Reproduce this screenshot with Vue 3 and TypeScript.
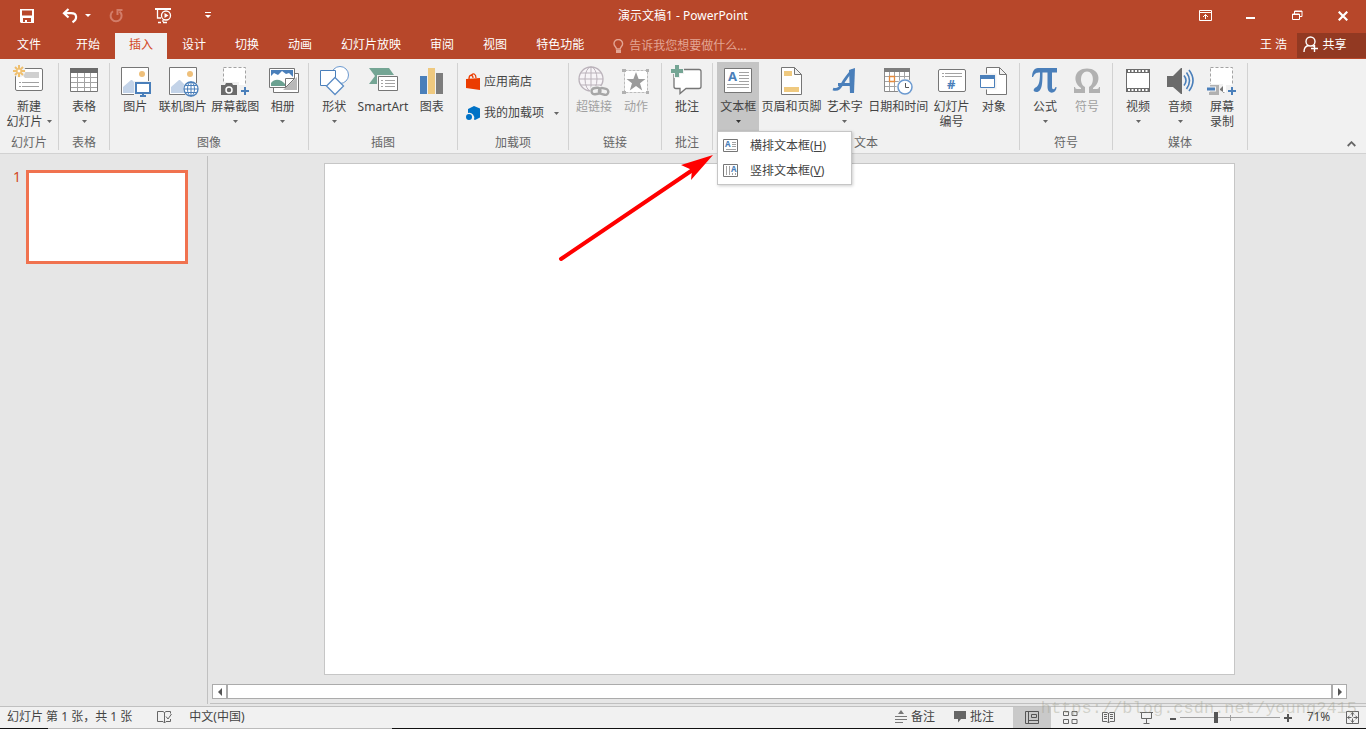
<script setup lang="ts">
import { ref } from 'vue'

interface Tool {
  icon: string
  label: string
  label2?: string
  caret?: boolean
  disabled?: boolean
  menu?: boolean
}
interface Group {
  name: string
  tools: Tool[]
}

const tabs = ['开始', '插入', '设计', '切换', '动画', '幻灯片放映', '审阅', '视图', '特色功能']
const activeTab = ref('插入')
const query = ref('')
const zoom = ref(35)

const groups: Group[] = [
  { name: '幻灯片', tools: [{ icon: 'slide', label: '新建', label2: '幻灯片', caret: true }] },
  { name: '表格', tools: [{ icon: 'table', label: '表格', caret: true }] },
  {
    name: '图像',
    tools: [
      { icon: 'picture', label: '图片' },
      { icon: 'online', label: '联机图片' },
      { icon: 'capture', label: '屏幕截图', caret: true },
      { icon: 'album', label: '相册', caret: true },
    ],
  },
  {
    name: '插图',
    tools: [
      { icon: 'shapes', label: '形状', caret: true },
      { icon: 'smartart', label: 'SmartArt' },
      { icon: 'chart', label: '图表' },
    ],
  },
  { name: '加载项', tools: [] },
  {
    name: '链接',
    tools: [
      { icon: 'link', label: '超链接', disabled: true },
      { icon: 'action', label: '动作', disabled: true },
    ],
  },
  { name: '批注', tools: [{ icon: 'comment', label: '批注' }] },
  {
    name: '文本',
    tools: [
      { icon: 'textbox', label: '文本框', caret: true, menu: true },
      { icon: 'header', label: '页眉和页脚' },
      { icon: 'wordart', label: '艺术字', caret: true },
      { icon: 'date', label: '日期和时间' },
      { icon: 'number', label: '幻灯片', label2: '编号' },
      { icon: 'object', label: '对象' },
    ],
  },
  {
    name: '符号',
    tools: [
      { icon: 'pi', label: '公式', caret: true },
      { icon: 'omega', label: '符号', disabled: true },
    ],
  },
  {
    name: '媒体',
    tools: [
      { icon: 'video', label: '视频', caret: true },
      { icon: 'audio', label: '音频', caret: true },
      { icon: 'record', label: '屏幕', label2: '录制' },
    ],
  },
]
</script>

<template>
  <div class="window">
    <header class="top">
      <div class="titlebar">
        <div class="quick">
          <button class="save" aria-label="保存">
            <svg width="16" height="16" viewBox="0 0 16 16"><path fill="#fff" fill-rule="evenodd" d="M1 1h14v14H2l-1-1zM3 2.500v5h10v-5zM4 10v4h2v-2h2v2h4v-4z" /></svg>
          </button>
          <button class="undo" aria-label="撤消">
            <svg width="16" height="16" viewBox="0 0 16 16"><path fill="none" stroke="#fff" stroke-width="2.200" d="M6.500 1L2 5.200l4.500 4.300M2.500 5.200h6.500c6.500 0 6.500 6 1.500 9" /></svg>
          </button>
          <button class="undo-more" aria-label="更多撤消"><svg width="6" height="4" viewBox="0 0 6 4"><path fill="#fff" d="M0 0h6L3 3z" /></svg></button>
          <button class="redo" aria-label="重复">
            <svg width="16" height="16" viewBox="0 0 16 16"><path fill="none" stroke="#d27d69" stroke-width="2" d="M5 3.300a5.500 5.500 0 1 0 6.500.2M9.500 7V2H14.500" /></svg>
          </button>
          <button class="present" aria-label="从头开始">
            <svg width="18" height="16" viewBox="0 0 18 16"><path fill="#fff" d="M1 0h16v2H1z" /><path fill="none" stroke="#fff" stroke-width="1.300" d="M3.500 2v8H7M9 12v2M4 14.500h3M9 14.500h4" /><circle cx="12" cy="7.500" r="4.500" fill="#b7472a" stroke="#fff" stroke-width="1.300" /><path fill="#fff" d="M10.500 5v5l4-2.500z" /></svg>
          </button>
          <button class="customize" aria-label="自定义快速访问工具栏"><svg width="6" height="7" viewBox="0 0 6 7"><path fill="#fff" d="M0 0h6v1H0zM0 3h6L3 6z" /></svg></button>
        </div>
        <div class="title">演示文稿1 - PowerPoint</div>
        <div class="controls">
          <button aria-label="功能区显示选项"><svg width="13" height="11" viewBox="0 0 13 11"><path fill="none" stroke="#fff" d="M.5.5h12v10H.5zM0 2.500h13M6.500 9V4.500M4 7l2.500-2.500L9 7M5 5.500h3" /></svg></button>
          <button aria-label="最小化"><svg width="10" height="10" viewBox="0 0 10 10"><path fill="#fff" d="M0 6h9v2H0z" /></svg></button>
          <button aria-label="还原"><svg width="11" height="11" viewBox="0 0 11 11"><path fill="none" stroke="#fff" d="M.5 4h7v5.500h-7zM0 4.500h8M2.500 4V1h7.500v5.500H8M2.500 1.500H10" /></svg></button>
          <button aria-label="关闭"><svg width="10" height="10" viewBox="0 0 10 10"><path stroke="#fff" stroke-width="2.200" d="M.7.7l8.600 8.600M9.300.7L.7 9.300" /></svg></button>
        </div>
      </div>

      <div class="tabrow">
        <button class="file">文件</button>
        <nav class="tabs">
          <button v-for="t in tabs" :key="t" :class="{ active: t === activeTab }" @click="activeTab = t">{{ t }}</button>
        </nav>
        <label class="tell">
          <svg width="11" height="15" viewBox="0 0 11 15"><path fill="none" stroke="#e3a594" stroke-width="1.400" d="M3.500 10C3.500 8 1 7.500 1 4.800a4.300 4.300 0 0 1 8.600 0C9.600 7.500 7.200 8 7.200 10z" /><path fill="#e3a594" d="M3 11h5v3H3z" /></svg>
          <input v-model="query" type="text" placeholder="告诉我您想要做什么..." aria-label="告诉我您想要做什么" />
        </label>
        <button class="user">王 浩</button>
        <button class="share">
          <svg width="16" height="17" viewBox="0 0 16 17"><g fill="none" stroke="#fff" stroke-width="1.400"><circle cx="7.500" cy="5.500" r="4.500" /><path d="M1 16c0-4 2-6 4.500-6.500M9.500 9.500l1.500 1M8 12.500h7M11.500 9v7" /></g></svg>
          共享
        </button>
      </div>
    </header>

    <section class="ribbon" aria-label="插入">
      <div v-for="g in groups" :key="g.name" class="group">
        <div v-if="g.tools.length" class="tools">
          <div v-for="t in g.tools" :key="t.icon" class="slot">
            <button class="tool" :class="{ open: t.menu }" :disabled="t.disabled">
              <svg class="icon" width="32" height="32" viewBox="0 0 32 32" fill="none">
                <template v-if="t.icon === 'slide'">
                  <rect x="2.500" y="3.500" width="27" height="22" rx="1.500" fill="#fff" stroke="#767676" />
                  <path fill="#d0d0d0" d="M7 7h19v6H12z" />
                  <path stroke="#a0a0a0" d="M6 17.500h2M9 17.500h17M6 21.500h2M9 21.500h17" />
                  <circle cx="6" cy="6" r="6.500" fill="#f1f1f1" />
                  <path stroke="#efbf6e" stroke-width="2" d="M6 0v12M0 6h12M2 2l8 8M10 2l-8 8" />
                  <circle cx="6" cy="6" r="2" fill="#fff" stroke="#efbf6e" />
                </template>
                <template v-else-if="t.icon === 'table'">
                  <path fill="#fff" stroke="#767676" d="M2.500 3.500h27v23h-27z" />
                  <path fill="#6b6b6b" d="M2 3h28v5H2z" />
                  <path stroke="#a3a3a3" d="M3 12.500h26M3 17.500h26M3 22.500h26M9.500 8v18M16.500 8v18M22.500 8v18" />
                </template>
                <template v-else-if="t.icon === 'picture' || t.icon === 'online'">
                  <path fill="#fff" stroke="#767676" d="M2.500 2.500h27v27h-27z" />
                  <circle cx="23" cy="9" r="3" fill="#efc07b" />
                  <path fill="#c3d3e8" d="M4 22l8-7h1l8 8v5H4z" />
                  <template v-if="t.icon === 'picture'">
                    <path fill="#f1f1f1" d="M15 16h17v16H15z" />
                    <path fill="#fff" stroke="#4a7fba" stroke-width="2" d="M17 18h14v10H17z" />
                    <path fill="#4a7fba" d="M23 29h2v1h2v2h-6v-2h2z" />
                  </template>
                  <template v-else>
                    <circle cx="24" cy="24" r="8" fill="#f1f1f1" />
                    <circle cx="24" cy="24" r="7" fill="#fff" stroke="#4a7fba" stroke-width="1.300" />
                    <path stroke="#4a7fba" d="M24 17v14M17 24h14M18.500 20.500h11M18.500 27.500h11" />
                    <ellipse cx="24" cy="24" rx="3.500" ry="7" stroke="#4a7fba" />
                  </template>
                </template>
                <template v-else-if="t.icon === 'capture' || t.icon === 'record'">
                  <path fill="#fff" stroke="#a3a3a3" stroke-dasharray="3 2" d="M4.500 2.500h22v25h-22z" />
                  <template v-if="t.icon === 'capture'">
                    <path fill="#f1f1f1" d="M1 17h19v13H1zM20 20h12v12H20z" />
                    <path fill="#6b6b6b" d="M2 20h4l1-2h6l1 2h4v10H2z" />
                    <circle cx="10" cy="25" r="3" fill="#6b6b6b" stroke="#fff" stroke-width="1.500" />
                  </template>
                  <template v-else>
                    <path fill="#f1f1f1" d="M1 19h16v13H1zM20 20h12v12H20z" />
                    <path fill="#b1b1b1" d="M4 20h9v10H3v-3h1z" />
                    <path fill="#767676" d="M14 24l3-3v6l-3-2z" />
                    <path stroke="#f1f1f1" stroke-width="5" d="M1 24h9" />
                    <path stroke="#4a7fba" stroke-width="3" d="M1 24h8" />
                  </template>
                  <path stroke="#4a7fba" stroke-width="2" d="M22 26h8M26 22v8" />
                </template>
                <template v-else-if="t.icon === 'album'">
                  <path fill="#fff" stroke="#767676" d="M6.500 8.500h25v19h-25z" />
                  <path fill="#b8b8b8" d="M16 25l14-13v13z" />
                  <path fill="#fff" stroke="#767676" d="M2.500 3.500h25v10l-9 9h-16z" />
                  <path fill="#4a7fba" d="M4 5h22v9H4z" />
                  <path fill="#fff" d="M4 11l3-3 4 2 4-4 4 3 3-1 4 4v3H4z" />
                  <path fill="#6ba292" d="M4 18c4-5 10-4 15 2v1H4z" />
                  <path fill="#fff" stroke="#767676" d="M27.500 13.500h-9v9z" />
                </template>
                <template v-else-if="t.icon === 'shapes'">
                  <circle cx="22" cy="10" r="8.500" fill="#fff" stroke="#6c9ad0" />
                  <path fill="#fff" stroke="#4a7fba" d="M2.500 5.500h15v15h-15z" />
                  <path fill="#fff" stroke="#5b8cc5" stroke-width="1.300" d="M17 12.500l8.500 8.500-8.500 8.500L8.500 21z" />
                </template>
                <template v-else-if="t.icon === 'smartart'">
                  <path fill="#74a594" d="M2 3h20l5 7-6 9H2l6-8z" />
                  <path fill="#f1f1f1" d="M10 10h22v18H10z" />
                  <path fill="#fff" stroke="#767676" d="M11.500 11.500h19v14h-19z" />
                  <path stroke="#a3a3a3" d="M14 15.500h2M18 15.500h10M14 18.500h2M18 18.500h10M14 21.500h2M18 21.500h10" />
                </template>
                <template v-else-if="t.icon === 'chart'">
                  <path fill="#4a7fba" d="M4 11h7v18H4z" /><path fill="#efc97f" d="M12 3h7v26h-7z" /><path fill="#7d7d7d" d="M20 8h7v21h-7z" />
                </template>
                <template v-else-if="t.icon === 'link'">
                  <circle cx="13" cy="14" r="12" fill="#f7f4f7" stroke="#bbb3bb" stroke-width="1.300" />
                  <path stroke="#bbb3bb" d="M13 2v24M1 14h24M3 8h20M3 20h20" />
                  <ellipse cx="13" cy="14" rx="6" ry="12" stroke="#bbb3bb" />
                  <rect x="12" y="21" width="20" height="11" rx="4" fill="#f1f1f1" />
                  <rect x="13.500" y="23" width="9" height="6" rx="3" stroke="#a6a6a6" stroke-width="2.400" transform="rotate(-10 18 26)" />
                  <rect x="21" y="23.500" width="9.500" height="6" rx="3" stroke="#a6a6a6" stroke-width="2.400" transform="rotate(14 26 26)" />
                </template>
                <template v-else-if="t.icon === 'action'">
                  <path fill="#fff" stroke="#bcbcbc" stroke-dasharray="3 1" d="M4.500 5.500h23v22h-23z" />
                  <path fill="#b1b1b1" d="M2 4h4v3H2zM26 4h3v3h-3zM2 26h4v3H2zM26 26h3v3h-3z" />
                  <path fill="#9b9b9b" d="M16 7l2.600 7h6.900l-5.500 4.200 2.200 7.300L16 21l-6.200 4.500 2.200-7.300L6.500 14h6.900z" />
                </template>
                <template v-else-if="t.icon === 'comment'">
                  <path fill="#fff" stroke="#767676" stroke-width="1.300" d="M5 4.500h23q2 0 2 2v15q0 2-2 2H15l-6 5v-5H5q-2 0-2-2v-15q0-2 2-2z" />
                  <path stroke="#f1f1f1" stroke-width="6" d="M0 6h13M6 0v13" />
                  <path stroke="#74a594" stroke-width="4" d="M0 6h12M6 0v12" />
                </template>
                <template v-else-if="t.icon === 'textbox'">
                  <path fill="#fff" stroke="#767676" d="M2.500 3.500h27v24h-27z" />
                  <text x="6" y="16" font-size="13" font-weight="700" fill="#4a7fba" class="letter">A</text>
                  <path stroke="#a3a3a3" d="M17 7.500h10M17 10.500h10M17 13.500h10M17 16.500h10M5 19.500h22M5 22.500h22" />
                </template>
                <template v-else-if="t.icon === 'header'">
                  <path fill="#fff" stroke="#767676" d="M5.500 2.500h13l7 7v20h-20zM18.500 2.500v7h7" />
                  <path fill="#efc97f" d="M8 6h8v5H8zM8 22h15v5H8z" />
                </template>
                <template v-else-if="t.icon === 'wordart'">
                  <path stroke="#4a7fba" stroke-width="2.800" stroke-linejoin="round" d="M4 24c6 2 8-3 11-8 3-4 5-8 9-11" />
                  <path fill="#4a7fba" d="M20 5l6-2-1 25h-4z" />
                  <path stroke="#4a7fba" stroke-width="3" d="M9 19.500h14" />
                </template>
                <template v-else-if="t.icon === 'date'">
                  <path fill="#fff" stroke="#8a8a8a" d="M2.500 3.500h25v23h-25z" />
                  <path fill="#7d7d7d" d="M2 3h26v4H2z" />
                  <path stroke="#a3a3a3" d="M3 11.500h24M3 16.500h24M3 21.500h24M7.500 7v19M12.500 7v19M17.500 7v19M22.500 7v19" />
                  <path fill="#fff" stroke="#e58a3c" stroke-width="1.300" d="M7.500 11.500h5v5h-5z" />
                  <circle cx="23" cy="22" r="8.500" fill="#f1f1f1" />
                  <circle cx="23" cy="22" r="7" fill="#fff" stroke="#6c9ad0" stroke-width="1.500" />
                  <path stroke="#555" d="M23.500 18v4.500H27" />
                </template>
                <template v-else-if="t.icon === 'number'">
                  <rect x="2.500" y="4.500" width="27" height="22" rx="1.500" fill="#fff" stroke="#767676" />
                  <path stroke="#a3a3a3" d="M6 8.500h2M9 8.500h17M6 11.500h2M9 11.500h17" />
                  <text x="11" y="24" font-size="13" font-weight="700" fill="#4a7fba" class="letter">#</text>
                </template>
                <template v-else-if="t.icon === 'object'">
                  <path fill="#fff" stroke="#767676" d="M8.500 2.500h13l7 7v20h-20zM21.500 2.500v7h7" />
                  <path fill="#fff" stroke="#f1f1f1" stroke-width="4" d="M2.500 10.500h14v12h-14z" />
                  <path fill="#fff" stroke="#4a7fba" d="M2.500 10.500h14v12h-14z" />
                  <path fill="#4a7fba" d="M2 10h15v4H2z" />
                </template>
                <template v-else-if="t.icon === 'pi'">
                  <path fill="#4a7fba" d="M9 3h19v4.500h-5V22c0 3 2.500 3 3.500 0h1c0 7-9 8-9 0V7.500h-5c0 9 0 19.500-6 19.500-4.500 0-3-4 0-5 3-2 3.500-8 3.500-14.500C7.500 7.500 6 8 4 12H3c0-5 2-9 6-9z" />
                </template>
                <template v-else-if="t.icon === 'omega'">
                  <path fill="#b1b1b1" d="M3 28v-6h1q0 2 2 2h4v-1C1 17 3 3.500 16 3.500S31 17 22 23v1h4q2 0 2-2h1v6H18v-6c6-3 5-15.500-2-15.500S8 19 14 22v6z" />
                </template>
                <template v-else-if="t.icon === 'video'">
                  <path fill="#6b6b6b" d="M4 4h24v23H4z" />
                  <path fill="#fff" d="M5 8h22v15H5z" />
                  <path stroke="#fff" stroke-width="2" stroke-dasharray="2 1.500" d="M6 6h21M6 25h21" />
                </template>
                <template v-else-if="t.icon === 'audio'">
                  <path fill="#6b6b6b" d="M3 11h6l8-8h1v26h-1l-8-7H3z" />
                  <path stroke="#4a7fba" stroke-width="1.600" d="M20 10.500q4 5 0 10M22.500 7.500q6 8 0 16.500M25 5q8 10.500 0 21" />
                </template>
              </svg>
              <span class="label">{{ t.label }}</span>
              <span class="label second">
                {{ t.label2 }}
                <svg v-if="t.caret" width="5" height="3" viewBox="0 0 5 3"><path fill="currentColor" d="M0 0h5L2.500 3z" /></svg>
              </span>
            </button>
            <template v-if="t.menu">
              <div class="menu" role="menu">
                <button role="menuitem">
                  <svg width="16" height="14" viewBox="0 0 16 14" fill="none"><path fill="#fff" stroke="#767676" d="M.5.5h14v12H.5z" /><text x="2" y="8" font-size="8" font-weight="700" fill="#4a7fba" class="letter">A</text><path stroke="#a3a3a3" d="M9 3.500h4M9 5.500h4M9 7.500h4M3 10.500h10" /></svg>
                  <span>横排文本框(<u>H</u>)</span>
                </button>
                <button role="menuitem">
                  <svg width="16" height="14" viewBox="0 0 16 14" fill="none"><path fill="#fff" stroke="#767676" d="M.5.5h14v12H.5z" /><text x="8" y="8" font-size="8" font-weight="700" fill="#4a7fba" class="letter">A</text><path stroke="#a3a3a3" d="M3.500 2v9M6.500 2v9M9.500 9v2M12.500 9v2" /></svg>
                  <span>竖排文本框(<u>V</u>)</span>
                </button>
              </div>
              <svg class="pointer" width="160" height="112" viewBox="0 0 160 112"><path stroke="#f00" stroke-width="4" stroke-linecap="round" d="M5 107L138 17" /><path fill="#f00" d="M157 3L125 13l11 5-1 10z" /></svg>
            </template>
          </div>
        </div>
        <div v-else class="addins">
          <button>
            <svg width="16" height="18" viewBox="0 0 16 18"><path fill="#eb3c00" d="M1 6l14-1v12L1 15z" /><path fill="none" stroke="#eb3c00" stroke-width="1.300" d="M4 6c0-5 4-5 4-1M6 3c2-4 5-2 5 2" /></svg>
            应用商店
          </button>
          <button>
            <svg width="16" height="18" viewBox="0 0 16 18"><path fill="#0072c6" d="M9 2l6 2.500v9L10 16l-1-.500a5 5 0 0 0-6-6.500V5z" /><circle cx="4" cy="13" r="3" fill="#0072c6" /></svg>
            我的加载项
            <svg class="drop" width="5" height="3" viewBox="0 0 5 3"><path fill="#666" d="M0 0h5L2.500 3z" /></svg>
          </button>
        </div>
        <div class="caption">{{ g.name }}</div>
      </div>
      <button class="collapse" aria-label="折叠功能区"><svg width="9" height="6" viewBox="0 0 9 6"><path fill="none" stroke="#666" stroke-width="1.800" d="M.7 5l3.800-3.800L8.300 5" /></svg></button>
    </section>

    <main class="work">
      <aside class="thumbs">
        <span class="index">1</span>
        <button class="thumb" aria-label="幻灯片 1"></button>
      </aside>
      <section class="editor">
        <div class="stage"><div class="slide"></div></div>
        <div class="scroll">
          <button aria-label="向左滚动"><svg width="4" height="8" viewBox="0 0 4 8"><path fill="#555" d="M4 0v8L0 4z" /></svg></button>
          <div class="track"></div>
          <button aria-label="向右滚动"><svg width="4" height="8" viewBox="0 0 4 8"><path fill="#555" d="M0 0v8l4-4z" /></svg></button>
        </div>
      </section>
    </main>

    <footer class="status">
      <span>幻灯片 第 1 张，共 1 张</span>
      <button class="spell" aria-label="拼写检查"><svg width="15" height="14" viewBox="0 0 15 14"><path fill="none" stroke="#666" d="M7.500 2.500L6 1.500H.5v10H6l1.500 1.500L9 11.500h4.500V9M7.500 2.500V13M7.500 2.500l1.500-1h4.500v2M9 6.500L11 9l3.500-5" /></svg></button>
      <button>中文(中国)</button>
      <div class="right">
        <button class="note"><svg width="12" height="13" viewBox="0 0 12 13"><path fill="#777" d="M6 0l3 4H3z" /><path stroke="#777" d="M0 6.500h12M0 9.500h12M0 12.500h8" /></svg>备注</button>
        <button class="note"><svg width="12" height="13" viewBox="0 0 12 13"><path fill="#666" d="M0 1h12v8H7l-3 3.500V9H0z" /></svg>批注</button>
        <div class="views">
          <button class="on" aria-label="普通视图"><svg width="15" height="13" viewBox="0 0 15 13"><path fill="none" stroke="#555" d="M.5.500h13v12H.5zM3.500 1v11M3.500 9.500h10M6.500 3.500h5v3h-5z" /></svg></button>
          <button aria-label="幻灯片浏览"><svg width="15" height="13" viewBox="0 0 15 13"><path fill="none" stroke="#666" d="M.5.500h5v4h-5zM9 .5h5v4H9zM.5 8.500h5v4h-5zM9 8.500h5v4H9z" /></svg></button>
          <button aria-label="阅读视图"><svg width="13" height="13" viewBox="0 0 13 13"><path fill="none" stroke="#666" d="M.5 1.500H5l1.500 1 1.500-1h4.500v9H8L6.500 12 5 10.500H.5zM6.500 2v10M2 3.500h3M2 5.500h3M2 7.500h3M8 3.500h3M8 5.500h3M8 7.500h3" /></svg></button>
          <button aria-label="幻灯片放映"><svg width="13" height="13" viewBox="0 0 13 13"><path fill="none" stroke="#666" d="M0 1.500h13M1.500 2v5.500h10V2M6.500 8v4M3.500 12.500h6" /></svg></button>
        </div>
        <button class="step" aria-label="缩小"><svg width="6" height="8" viewBox="0 0 6 8"><path fill="#555" d="M0 4h6v2H0z" /></svg></button>
        <input v-model="zoom" class="zoom" type="range" min="0" max="100" aria-label="缩放" />
        <button class="step" aria-label="放大"><svg width="8" height="8" viewBox="0 0 8 8"><path fill="#555" d="M0 3h3V0h2v3h3v2H5v3H3V5H0z" /></svg></button>
        <button class="percent">71%</button>
        <button class="fit" aria-label="按窗口大小调整"><svg width="13" height="13" viewBox="0 0 13 13"><path fill="none" stroke="#666" d="M.5.500h12v12H.5zM6.500 1.500v4M6.500 7.500v4M1.500 6.500h4M7.500 6.500h4M5 3.500l1.500-2 1.500 2M5 9.500l1.500 2 1.500-2M3.500 5l-2 1.500 2 1.500M9.500 5l2 1.500-2 1.500" /></svg></button>
      </div>
      <div class="watermark">https://blog.csdn.net/young2415</div>
    </footer>
    <div class="edge"></div>
  </div>
</template>

<style>
body {
  margin: 0;
  overflow: hidden;
}
</style>

<style scoped>
.window {
  display: flex;
  flex-direction: column;
  height: 100vh;
  background: #e6e6e6;
  color: #444;
  font: 12px/16px "Noto Sans", "Noto Sans CJK SC", sans-serif;
}
button {
  display: flex;
  align-items: center;
  justify-content: center;
  margin: 0;
  padding: 0;
  border: 0;
  background: none;
  color: inherit;
  font: inherit;
  white-space: nowrap;
}
svg {
  display: block;
  flex: none;
}
.letter {
  font-family: "Noto Sans", sans-serif;
}
.top {
  background: #b7472a;
  color: #fff;
}
.titlebar {
  display: grid;
  grid-template-columns: 1fr auto 1fr;
  align-items: center;
  height: 31px;
  padding-bottom: 2px;
}
.titlebar button {
  height: 30px;
}
.quick,
.controls {
  display: flex;
}
.quick {
  padding-left: 4px;
}
.save {
  width: 46px;
}
.undo {
  width: 20px;
  margin-left: 10px;
}
.undo-more {
  width: 16px;
}
.redo {
  width: 40px;
}
.present {
  width: 54px;
}
.customize {
  width: 36px;
}
.controls {
  justify-content: flex-end;
}
.controls button {
  width: 46px;
}
.tabrow {
  display: flex;
  height: 26px;
}
.tabrow button {
  height: 26px;
  padding-bottom: 2px;
}
.file {
  width: 58px;
  margin-right: 4px;
}
.tabs {
  display: flex;
  gap: 1px;
}
.tabs button {
  padding: 0 14px 2px;
}
.tabs .active {
  background: #f1f1f1;
  color: #d24726;
}
.tell {
  display: flex;
  flex: 1;
  align-items: center;
  gap: 5px;
  padding-left: 15px;
}
.tell input {
  flex: 1;
  min-width: 0;
  padding: 0;
  border: 0;
  outline: 0;
  background: none;
  color: #fff;
  font: inherit;
}
.tell input::placeholder {
  color: #e3a594;
  opacity: 1;
}
.user {
  margin-right: 10px;
}
.tabrow .share {
  gap: 3px;
  width: 69px;
  height: 25px;
  padding-right: 13px;
  background: #923922;
}
.ribbon {
  display: grid;
  grid-template-columns: 59px 51px 199px 149px 111px 93px 51px 307px 93px 135px 1fr;
  height: 94px;
  border-bottom: 1px solid #d2d2d2;
  background: #f1f1f1;
}
.group {
  display: flex;
  flex-direction: column;
  justify-content: space-between;
  height: 87px;
  margin-top: 4px;
  border-right: 1px solid #d2d2d2;
}
.tools {
  display: flex;
  height: 69px;
  margin-top: -1px;
  padding: 0 4px;
}
.slot {
  position: relative;
  display: flex;
  flex: 1 0 auto;
}
.tool {
  flex: 1;
  flex-direction: column;
  justify-content: flex-start;
  min-width: 42px;
  padding: 3px 2px 0;
}
.tool:disabled {
  color: #a0a0a0;
}
.tool.open {
  background: #c5c5c5;
}
.label {
  height: 15px;
  line-height: 15px;
  margin-top: 2px;
}
.second {
  display: flex;
  align-items: center;
  gap: 4px;
  margin-top: 0;
}
.second svg {
  color: #666;
}
.open .second svg {
  color: #333;
}
.caption {
  height: 15px;
  color: #666;
  text-align: center;
}
.menu {
  position: absolute;
  z-index: 2;
  top: 69px;
  left: 0;
  width: 133px;
  padding: 1px 0;
  border: 1px solid #c6c6c6;
  background: #fff;
  box-shadow: 1px 1px 3px rgba(0, 0, 0, 0.2);
}
.menu button {
  justify-content: flex-start;
  gap: 11px;
  width: 100%;
  height: 25px;
  padding-left: 5px;
}
.pointer {
  position: absolute;
  z-index: 1;
  top: 90px;
  left: -161px;
  pointer-events: none;
}
.addins {
  display: flex;
  flex-direction: column;
  gap: 11px;
  padding: 9px 9px 0 7px;
}
.addins button {
  justify-content: flex-start;
  gap: 3px;
  height: 20px;
}
.drop {
  margin-left: auto;
}
.collapse {
  align-self: end;
  justify-self: end;
  width: 30px;
  height: 18px;
}
.work {
  display: flex;
  flex: 1;
  min-height: 0;
}
.thumbs {
  display: flex;
  gap: 5px;
  width: 194px;
  margin: 2px 0 2px;
  padding: 14px 0 0 13px;
  border-right: 1px solid #c0c0c0;
}
.index {
  width: 8px;
  color: #d24726;
  font-size: 14px;
  line-height: 14px;
}
.thumb {
  width: 162px;
  height: 94px;
  border: 3px solid #f0724f;
  background: #fff;
}
.editor {
  display: flex;
  flex: 1;
  flex-direction: column;
  margin: 0 0 2px 2px;
  border-bottom: 1px solid #c0c0c0;
}
.stage {
  display: flex;
  flex: 1;
  justify-content: center;
  min-height: 0;
  padding: 9px 17px 9px 0;
}
.slide {
  box-sizing: border-box;
  height: 100%;
  aspect-ratio: 16 / 9;
  border: 1px solid #c6c6c6;
  background: #fff;
}
.scroll {
  display: flex;
  height: 15px;
  margin: 0 19px 4px 2px;
}
.scroll button {
  box-sizing: border-box;
  width: 15px;
  border: 1px solid #ababab;
  background: #fff;
}
.track {
  flex: 1;
  border: 1px solid #ababab;
  background: #fff;
}
.status {
  position: relative;
  display: flex;
  align-items: center;
  height: 21px;
  padding-left: 7px;
  border-top: 1px solid #c0c0c0;
  background: #f1f1f1;
}
.status > span,
.status > button,
.note,
.percent {
  margin-bottom: 2px;
}
.status button {
  height: 21px;
}
.status .spell {
  margin-right: 17px;
  margin-left: 25px;
}
.right {
  display: flex;
  align-items: center;
  margin-left: auto;
  padding-right: 4px;
}
.note {
  gap: 4px;
  margin-right: 19px;
}
.views {
  display: flex;
}
.views button {
  width: 38px;
}
.views .on {
  background: #c9c9c9;
}
.step {
  width: 15px;
}
.zoom {
  appearance: none;
  width: 100px;
  height: 12px;
  margin: 0;
  background: linear-gradient(#a0a0a0, #a0a0a0) center / 100% 1px no-repeat,
    linear-gradient(#a0a0a0, #a0a0a0) center / 1px 6px no-repeat;
}
.zoom::-webkit-slider-thumb {
  appearance: none;
  width: 4px;
  height: 11px;
  background: #555;
}
.percent {
  width: 47px;
}
.fit {
  width: 20px;
}
.watermark {
  position: absolute;
  right: 9px;
  top: -8px;
  color: rgba(150, 150, 130, 0.35);
  font: 17px/20px "Liberation Mono", monospace;
  pointer-events: none;
}
.edge {
  height: 1px;
  background: linear-gradient(90deg, #111 48px, #bbb 48px, #bbb 392px, #111 392px);
}
</style>
